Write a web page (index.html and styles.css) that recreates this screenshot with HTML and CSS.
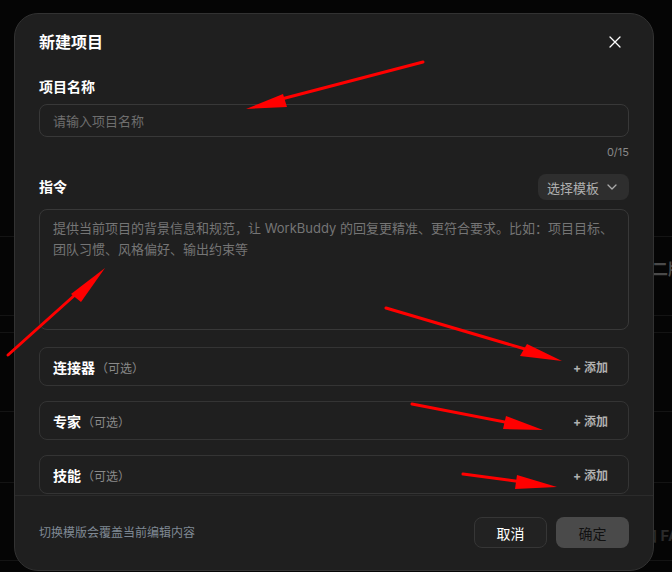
FILE: index.html
```html
<!DOCTYPE html>
<html lang="zh-CN">
<head>
  <meta charset="UTF-8">
  <meta name="viewport" content="width=device-width, initial-scale=1.0">
  <title>新建项目</title>
  <link rel="stylesheet" href="styles.css">
</head>
<body>
  <!-- page behind the dialog -->
  <div class="page">
    <div class="page-row" style="top: 236px"></div>
    <div class="page-row" style="top: 315px"></div>
    <div class="page-row" style="top: 332px"></div>
    <div class="page-row" style="top: 411px"></div>
    <div class="page-row" style="top: 482px"></div>
    <div class="page-row" style="top: 560px"></div>
    <span class="page-text version">二版</span>
    <span class="page-text faq">加 FAQ</span>
  </div>

  <div class="modal">
    <div class="modal-header">
      <h2>新建项目</h2>
      <button class="close-btn" aria-label="关闭">
        <svg width="12" height="12" viewBox="0 0 12 12">
          <path d="M1 1L11 11M11 1L1 11" stroke="#fff" stroke-width="1.3" stroke-linecap="round"/>
        </svg>
      </button>
    </div>

    <div class="modal-body">
      <div class="field-label">项目名称</div>
      <div class="input">请输入项目名称</div>
      <div class="counter">0/15</div>

      <div class="field-head">
        <div class="field-label">指令</div>
        <button class="template-btn">
          选择模板
          <svg width="10" height="6" viewBox="0 0 10 6">
            <path d="M1 1L5 5L9 1" stroke="#aaa" stroke-width="1.3" fill="none" stroke-linecap="round" stroke-linejoin="round"/>
          </svg>
        </button>
      </div>
      <div class="textarea">提供当前项目的背景信息和规范，让 WorkBuddy 的回复更精准、更符合要求。比如：项目目标、团队习惯、风格偏好、输出约束等</div>

      <div class="option-list">
        <div class="option">
          <div class="option-title">连接器<span class="optional">（可选）</span></div>
          <span class="add">+ 添加</span>
        </div>
        <div class="option">
          <div class="option-title">专家<span class="optional">（可选）</span></div>
          <span class="add">+ 添加</span>
        </div>
        <div class="option">
          <div class="option-title">技能<span class="optional">（可选）</span></div>
          <span class="add">+ 添加</span>
        </div>
      </div>
    </div>

    <div class="modal-footer">
      <span class="hint">切换模版会覆盖当前编辑内容</span>
      <div class="actions">
        <button class="btn btn-cancel">取消</button>
        <button class="btn btn-ok">确定</button>
      </div>
    </div>
  </div>

  <!-- red markers on top -->
  <svg class="marks" width="672" height="572" viewBox="0 0 672 572">
    <g stroke="#ff0000" stroke-width="3" stroke-linecap="round" fill="#ff0000">
      <line x1="423" y1="62" x2="270" y2="102"/>
      <line x1="8" y1="355" x2="86" y2="285"/>
      <line x1="386" y1="308" x2="535" y2="352"/>
      <line x1="412" y1="404" x2="515" y2="424"/>
      <line x1="463" y1="474" x2="530" y2="483"/>
    </g>
    <g fill="#ff0000">
      <polygon points="246,109 283,94 287,107"/>
      <polygon points="105,268 71,294 81,302"/>
      <polygon points="562,361 520,356 527,344"/>
      <polygon points="543,430 503,429 506,416"/>
      <polygon points="557,487 515,489 517,475"/>
    </g>
  </svg>
</body>
</html>
```

FILE: styles.css
```css
* {
  box-sizing: border-box;
}

body {
  margin: 0;
  width: 672px;
  height: 572px;
  overflow: hidden;
  background: #050505;
  font-family: "Inter", "Noto Sans CJK SC", sans-serif;
  color: #fff;
  position: relative;
}

/* background page */
.page {
  position: absolute;
  inset: 0;
}

.page-row {
  position: absolute;
  left: 0;
  right: 0;
  height: 1px;
  background: #141414;
}

.page-text {
  position: absolute;
  font-weight: 700;
  white-space: nowrap;
}

.page-text.version {
  left: 652px;
  top: 256px;
  font-size: 16px;
  color: #4a4a4a;
}

.page-text.faq {
  left: 642px;
  top: 524px;
  font-size: 15px;
  color: #2a2a2a;
}

/* dialog */
.modal {
  position: absolute;
  left: 14px;
  top: 13px;
  width: 640px;
  height: 558px;
  background: #1f1f1f;
  border: 1px solid #323232;
  border-radius: 24px;
  display: flex;
  flex-direction: column;
  overflow: hidden;
}

.modal-header {
  height: 55px;
  padding: 0 28px 0 24px;
  display: flex;
  align-items: center;
  justify-content: space-between;
}

.modal-header h2 {
  margin: 0;
  font-size: 16px;
  font-weight: 700;
  line-height: 22px;
}

.close-btn {
  background: none;
  border: 0;
  padding: 0;
  width: 20px;
  height: 20px;
  display: flex;
  align-items: center;
  justify-content: center;
}

.modal-body {
  padding: 0 24px;
  flex: 1;
}

.field-label {
  font-size: 14px;
  font-weight: 700;
  line-height: 20px;
  margin-top: 8px;
}

.input {
  margin-top: 7px;
  height: 33px;
  border: 1px solid #383838;
  border-radius: 8px;
  padding: 0 13px;
  font-size: 13px;
  line-height: 32px;
  color: #6e6e6e;
}

.counter {
  margin-top: 7px;
  text-align: right;
  font-size: 11px;
  line-height: 16px;
  color: #888;
}

.field-head {
  margin-top: 14px;
  height: 26px;
  display: flex;
  align-items: center;
  justify-content: space-between;
}

.field-head .field-label {
  margin-top: 0;
}

.template-btn {
  height: 26px;
  padding: 0 12px 0 9px;
  border: 0;
  border-radius: 8px;
  background: #2e2e2e;
  color: #b0b0b0;
  font-family: inherit;
  font-size: 13px;
  display: flex;
  align-items: center;
  gap: 8px;
}

.textarea {
  margin-top: 9px;
  height: 121px;
  border: 1px solid #383838;
  border-radius: 8px;
  padding: 8px 13px;
  font-size: 13px;
  line-height: 21px;
  color: #757575;
}

.option-list {
  margin-top: 17px;
  display: flex;
  flex-direction: column;
  gap: 15px;
}

.option {
  height: 39px;
  border: 1px solid #343434;
  border-radius: 8px;
  padding: 0 20px 0 13px;
  display: flex;
  align-items: center;
  justify-content: space-between;
}

.option-title {
  font-size: 14px;
  font-weight: 700;
}

.optional {
  font-size: 12px;
  font-weight: 400;
  color: #8a8a8a;
  margin-left: 1px;
}

.add {
  font-size: 12px;
  font-weight: 700;
  color: #b0b0b0;
}

.modal-footer {
  height: 75px;
  border-top: 1px solid #2b2b2b;
  padding: 21px 24px 0;
  display: flex;
  align-items: flex-start;
  justify-content: space-between;
}

.hint {
  font-size: 12px;
  line-height: 31px;
  color: #7f8994;
}

.actions {
  display: flex;
  gap: 9px;
}

.btn {
  width: 73px;
  height: 31px;
  border-radius: 8px;
  font-family: inherit;
  font-size: 14px;
}

.btn-cancel {
  background: #222;
  border: 1px solid #363636;
  color: #fff;
}

.btn-ok {
  background: #4a4a4a;
  border: 0;
  color: #111;
}

.marks {
  position: absolute;
  left: 0;
  top: 0;
  pointer-events: none;
}
```
